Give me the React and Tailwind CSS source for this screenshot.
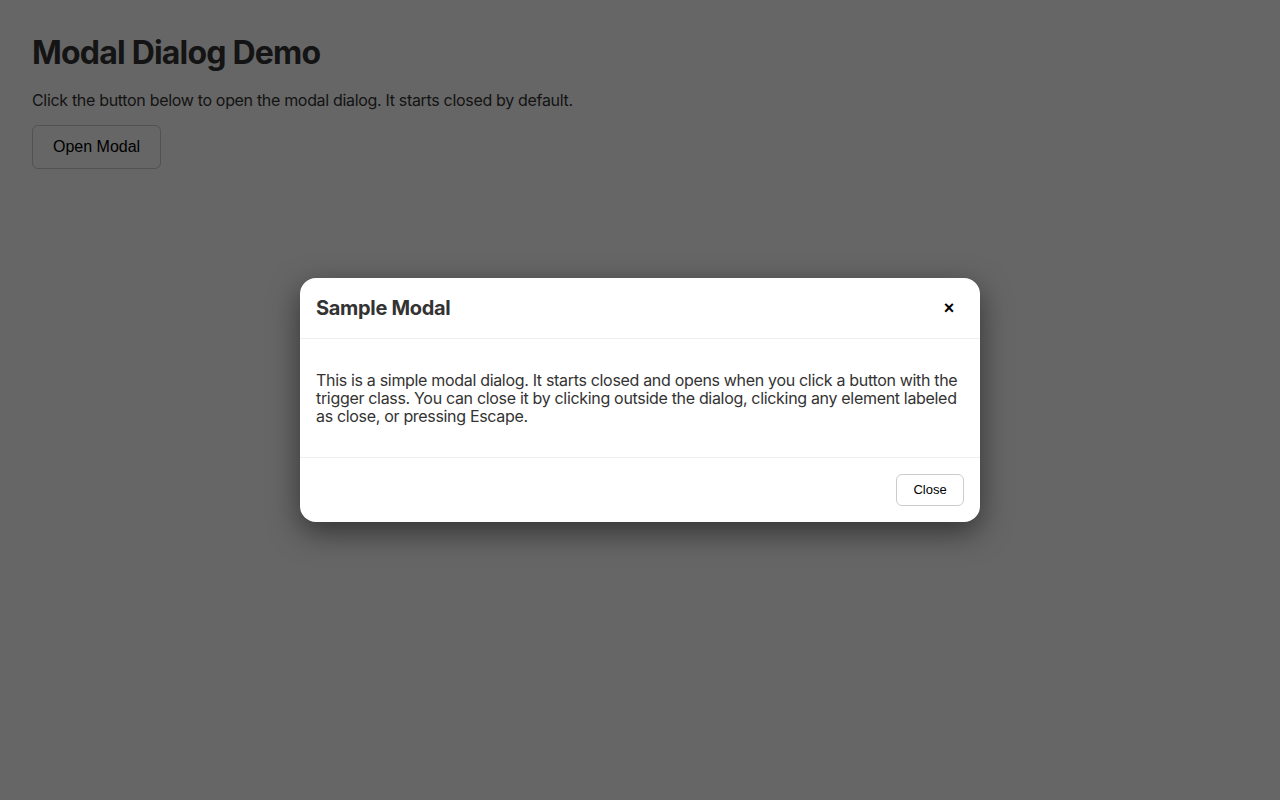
import React from "react";

const ModalDemo = () => {
  return (
    <div className="relative min-h-screen bg-white font-['Inter',sans-serif] tracking-[-0.02em]">
      <div className="p-8 text-[#333]">
        <h1 className="text-[32px] font-bold leading-[40px] mt-[1px] tracking-[-0.025em]">
          Modal Dialog Demo
        </h1>
        <p className="mt-[15px] text-base leading-6">
          Click the button below to open the modal dialog. It starts closed by default.
        </p>
        <button className="mt-[13px] h-[44px] px-5 rounded-md border border-[#ccc] bg-white font-['Liberation_Sans',sans-serif] tracking-normal text-base text-black">
          Open Modal
        </button>
      </div>

      {/* overlay */}
      <div className="absolute inset-0 flex items-center justify-center bg-[rgba(0,0,0,0.6)]">
        <div className="w-[680px] rounded-2xl bg-white shadow-[0_10px_30px_rgba(0,0,0,0.5)] text-[#333]">
          <div className="flex h-[61px] items-center justify-between px-4 border-b border-[#eee]">
            <h2 className="text-xl font-bold">Sample Modal</h2>
            <button className="mr-[10px] text-black text-lg font-bold leading-none font-['Liberation_Sans',sans-serif]">
              ×
            </button>
          </div>
          <div className="px-4 py-8 border-b border-[#eee]">
            <p className="text-base leading-[18px]">
              This is a simple modal dialog. It starts closed and opens when you click a button
              with the trigger class. You can close it by clicking outside the dialog, clicking
              any element labeled as close, or pressing Escape.
            </p>
          </div>
          <div className="flex justify-end p-4">
            <button className="h-8 w-[68px] rounded-md border border-[#ccc] bg-white text-[13px] tracking-normal text-black font-['Liberation_Sans',sans-serif]">
              Close
            </button>
          </div>
        </div>
      </div>
    </div>
  );
};

export default function App() {
  return <ModalDemo />;
}
